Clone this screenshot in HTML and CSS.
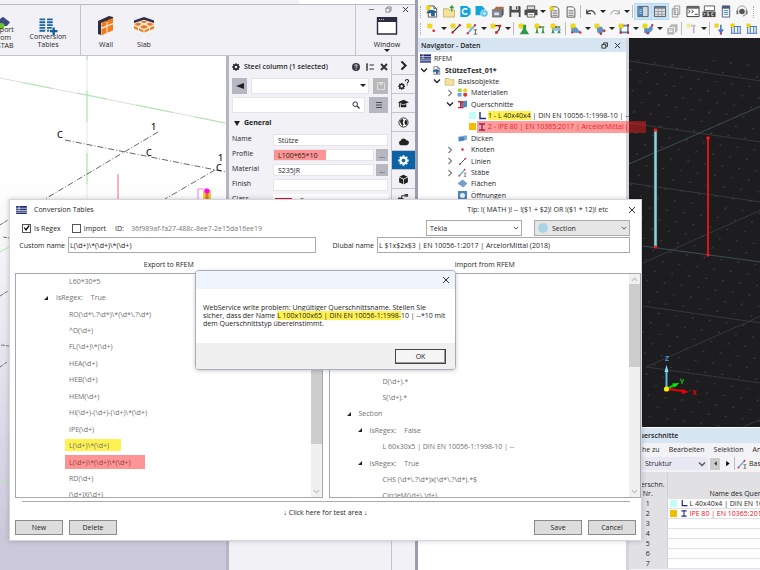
FILE: index.html
```html
<!DOCTYPE html>
<html lang="de">
<head>
<meta charset="utf-8">
<title>Conversion Tables</title>
<link rel="stylesheet" href="styles.css">
</head>
<body>
<svg class="defs" aria-hidden="true">
  <symbol id="star" viewBox="0 0 6 6"><path d="M3 0l.7 1.6L5.4.9 4.6 2.5 6 3l-1.4.6.8 1.6-1.7-.7L3 6l-.7-1.5-1.7.7.8-1.6L0 3l1.4-.5L.6.9l1.7.7z" fill="#f5dc00" stroke="#d9bd00" stroke-width=".3"/></symbol>
  <symbol id="gear" viewBox="0 0 16 16"><path fill="none" stroke="currentColor" stroke-width="3.4" d="M8 3.6a4.4 4.4 0 1 0 .01 0z"/><path stroke="currentColor" stroke-width="2.6" d="M8 .4v2.4M8 13.2v2.4M.4 8h2.4M13.2 8h2.4M2.6 2.6l1.8 1.8M11.6 11.6l1.8 1.8M2.6 13.4l1.8-1.8M11.6 4.4l1.8-1.8"/></symbol>
  <symbol id="flag" viewBox="0 0 12 9"><path fill="#1d2c72" d="M0 0h12v9H0z"/><path stroke="#fff" stroke-width=".8" d="M3.3 0v5M0 2.5h12M0 5h12M0 7h12"/></symbol>
  <symbol id="fileglobe" viewBox="0 0 14 14"><path d="M3 1h6l3 3v9H3z" fill="#fff" stroke="#555"/><path d="M9 1v3h3" fill="none" stroke="#555"/><path d="M1 9c1-5 9-5 11-1l-2 1v3H6V9z" fill="#2e6391"/></symbol>
  <symbol id="folder" viewBox="0 0 14 12"><path d="M1 2h5l1 1.5h6V11H1z" fill="#f2e29a" stroke="#b8a14c" stroke-width=".7"/></symbol>
  <symbol id="doc" viewBox="0 0 14 14"><path d="M2.500 1h6.500l2.500 2.500V13h-9z" fill="#fff" stroke="#444"/><path d="M4 5h6M4 7h6M4 9h6M4 11h6" stroke="#555" stroke-width=".8"/></symbol>
  <symbol id="line" viewBox="0 0 14 14"><path d="M3 11l8-8" stroke="#222" stroke-width="1.2"/><circle cx="3" cy="11" r="1.4" fill="#d8202a"/><circle cx="11.500" cy="2.500" r="1.400" fill="#d8202a"/></symbol>
  <symbol id="member" viewBox="0 0 14 14"><path d="M2 12l8-9" stroke="#6fa4dc" stroke-width="2"/><circle cx="2" cy="12" r="1.300" fill="#d8202a"/><circle cx="10.500" cy="2.500" r="1.300" fill="#d8202a"/><path d="M9 8h4M11 8v5M9 13h4" stroke="#444" stroke-width=".9"/></symbol>
  <symbol id="ang" viewBox="0 0 8 8"><path d="M2 0v6.500h6" fill="none" stroke="#1c2a86" stroke-width="1.400"/></symbol>
  <symbol id="ibeam" viewBox="0 0 8 8"><path d="M1 1h6M4 1v6M1 7h6" fill="none" stroke="#2b2f86" stroke-width="1.300"/></symbol>
  <symbol id="down" viewBox="0 0 8 8"><path d="M1 2.500l3 3 3-3" fill="none" stroke="currentColor" stroke-width="1.300"/></symbol>
  <symbol id="right" viewBox="0 0 8 8"><path d="M2.500 1l3 3-3 3" fill="none" stroke="currentColor" stroke-width="1.100"/></symbol>
  <symbol id="cross" viewBox="0 0 8 8"><path d="M1 1l6 6M7 1L1 7" stroke="currentColor" stroke-width="1"/></symbol>
  <symbol id="surface" viewBox="0 0 14 14"><path d="M2 5h5l5 6H2z" fill="#5f95cf" stroke="#3a6ea6" stroke-width=".6"/><circle cx="12" cy="11" r="1.400" fill="#d8202a"/><circle cx="2.500" cy="11" r="1.200" fill="#d8202a"/></symbol>
  <symbol id="support" viewBox="0 0 14 14"><path d="M2 4.500h10M3.500 4v7M10.500 4v7" stroke="#2f9a4c" stroke-width="1.500"/><path d="M1.500 12l2-4 2 4zM8.500 12l2-4 2 4z" fill="#2f9a4c"/><circle cx="7" cy="5" r="1.200" fill="#d8202a"/></symbol>
  <symbol id="load" viewBox="0 0 14 14"><path d="M2 12V4h10v8M5 4v7M9 4v7M1 12h12" fill="none" stroke="#3c78c0" stroke-width="1.200"/></symbol>
</svg>

<div class="desk">
  <section class="tekla" aria-label="Tekla">
    <div class="strip"><span></span></div>
    <header class="ribbon">
      <div class="group first">
        <div class="tool rstab"><svg viewBox="0 0 22 18"><path d="M2 8L11 1l9 7-4 5H6z" fill="#3c4a80"/><circle cx="9" cy="13" r="4" fill="#6fc52b"/></svg><span>Export<br>from<br>RSTAB</span></div>
        <div class="tool conv"><svg viewBox="0 0 20 18"><path d="M1 1.500h6M9 1.500h6M1 4.500h6M9 4.500h6M1 7.500h6M9 7.500h6M1 10.500h6M9 10.500h5M1 13.500h6M9 13.500h2" stroke="#1c64a4" stroke-width="1.900"/><path d="M16 10v8M12 14h8" stroke="#155a9d" stroke-width="2.400"/></svg><span>Conversion<br>Tables</span></div>
      </div>
      <div class="group shapes">
        <div class="tool"><svg viewBox="0 0 18 22"><path d="M1 6L12 1l4 1v3L4 8v12l-3-1z" fill="#2c2d48"/><path d="M4.500 7.500l5-2v5l-5 2zM10.500 5l5.500-2v5l-5.500 2.200zM4.500 14l5-2v6l-5 2.500zM10.500 11.500l5.500-2.200v6l-5.500 2.500z" fill="#f57c14"/></svg><span>Wall</span></div>
        <div class="tool"><svg viewBox="0 0 22 22"><path d="M1 8V5.500L11 2l10 3.500V8L11 4.800z" fill="#2c2d48"/><path d="M1 9l4.500-1.500L9 9l-4 2.200zM21 9l-4.500-1.500L13 9l4 2.200zM11 8.300l3.800-1.500L11 5.600 7.200 6.800zM6.500 12l4.500-2.200 4.500 2.200-4.500 2zM1 10.800l4 1.900v2.500L1 13.500zM21 10.800l-4 1.900v2.500l4-1.700zM6 13.200l4.500 2v2.300L6 15.600zM16 13.200l-4.500 2v2.300l4.500-1.900z" fill="#f57c14"/></svg><span>Slab</span></div>
      </div>
      <div class="group window">
        <div class="winctl"><svg viewBox="0 0 8 8"><path d="M1 4h6" stroke="#667"/></svg><svg viewBox="0 0 8 8"><path d="M1 2.500h4.500V7H1zM2.500 2.500V1H7v4.500H5.500" fill="none" stroke="#667" stroke-width=".8"/></svg><svg><use href="#cross"/></svg></div>
        <div class="tool"><svg viewBox="0 0 22 18"><path d="M1.500 1h19v16h-19z" fill="#fff" stroke="#2b2b42" stroke-width="1.400"/><path d="M1 0h20v5H1z" fill="#2b2b42"/><path d="M3 2.500h6" stroke="#ccc" stroke-dasharray="1 1"/></svg><span>Window</span><i class="caret"></i></div>
      </div>
    </header>
    <div class="tmain">
      <svg class="model" viewBox="0 56 226 514" preserveAspectRatio="xMinYMin slice">
        <path d="M87 56v144" stroke="#ecefec" stroke-width="1.500"/><path d="M87 56v4M87 91v31M87 153v31" stroke="#b9efb9" stroke-width="1.500"/>
        <path d="M0 78l226 45" stroke="#dcdcdc"/><path d="M23 82.600l29 5.800M77 93l30 6M136 105l37 7.500M195 117l30 6M0 252l9-5M0 481l9 2" stroke="#aee8ae"/>
        <path d="M65 140l161 32M158 132L45 199M215 170l-50 29" fill="none" stroke="#555" stroke-width=".9" stroke-dasharray="6 2 1 2"/>
        <path d="M0 225l8-5M3 237l6 1M0 296l8-5M1 345l8 1M0 367l7-5" stroke="#555" stroke-width=".8" stroke-dasharray="4 1"/>
        <path d="M118 174v26" stroke="#f99aa2" stroke-width="1.500"/>
        <path d="M198 200v-11h9" fill="none" stroke="#ee82ee"/><path d="M203 190h8v10h-8z" fill="#f1c84a"/><path d="M207 192v8" stroke="#e07818" stroke-width="3"/><circle cx="207" cy="191" r="2.500" fill="#f0f"/>
        <g font-family="Noto Sans" font-size="9" font-weight="500" fill="#111"><text x="57" y="138">C</text><text x="151" y="130">1</text><text x="146" y="156">C</text><text x="218" y="161">1</text><text x="216" y="171">C</text></g>
      </svg>
      <div class="props">
        <div class="phead"><svg class="i8"><use href="#gear"/></svg><b>Steel column (1 selected)</b>
          <svg class="i8" viewBox="0 0 8 8"><circle cx="4" cy="4" r="4" fill="#3a3c48"/><path d="M2.800 3.200c0-2 2.600-1.600 2.400-.2C5 3.800 4 3.800 4 4.800M4 5.600v1" fill="none" stroke="#fff" stroke-width=".9"/></svg>
          <svg class="i8" viewBox="0 0 8 8"><path d="M0 1h2M0 4h2M0 7h2M1 1v6M3.500 2H8M3.500 6H8" stroke="#333" stroke-width="1.200"/></svg>
          <svg class="i8" viewBox="0 0 8 8"><path d="M1 1l6 6M7 1L1 7" stroke="#333" stroke-width="2"/></svg></div>
        <div class="prow"><button aria-label="Back"><svg class="i8" viewBox="0 0 8 8"><path d="M8 1v6L0 4z" fill="#222"/></svg></button><select class="grow" aria-label="Preset"><option></option></select><i class="caret over"></i><button class="dis" aria-label="Save preset"><svg class="i8" viewBox="0 0 8 8"><path d="M.5.500h6l1 1v6h-7z" fill="none" stroke="#ddd"/><path d="M2.500.5h3V3h-3z" fill="#ddd"/></svg></button></div>
        <div class="prow search"><input class="grow" aria-label="Search"><svg class="i8 mag" viewBox="0 0 8 8"><circle cx="3.200" cy="3.200" r="2.300" fill="none" stroke="#333"/><path d="M5 5l2.500 2.500" stroke="#333" stroke-width="1.300"/></svg><button class="wide" aria-label="Menu"><svg class="i8" viewBox="0 0 8 8"><path d="M1 1.500h6M1 4h6M1 6.500h6" stroke="#333" stroke-width=".8"/></svg></button></div>
        <h3>General</h3>
        <div class="fields">
          <label for="n">Name</label><div><input id="n" value="Stütze"></div>
          <label for="p">Profile</label><div><input id="p" class="hl" value="L100*65*10"><button aria-label="Select profile">...</button></div>
          <label for="m">Material</label><div><input id="m" value="S235JR"><button aria-label="Select material">...</button></div>
          <label for="f">Finish</label><div><input id="f"></div>
          <label for="c">Class</label><div class="cls"><i></i><select id="c"><option>3</option></select><i class="caret"></i></div>
        </div>
      </div>
      <nav class="side" aria-label="Panels">
        <button aria-label="Collapse"><svg viewBox="0 0 8 8"><path d="M2.500 1l3 3-3 3" fill="none" stroke="#222" stroke-width="1.500"/></svg></button>
        <button aria-label="Settings help"><svg viewBox="0 0 12 12"><g transform="translate(0 4) scale(.5)"><use href="#gear" width="16" height="16"/></g><path d="M8 2.500C8-.3 12 .2 11.500 2.500 11.300 3.600 10 3.600 10 5M10 6v1.200" fill="none" stroke="#222" stroke-width="1.100"/></svg></button>
        <button aria-label="Tutorials"><svg viewBox="0 0 12 12"><path d="M6 2l6 2.500L6 7 0 4.500zM3 6.500l3 1.300 3-1.300V10H3zM1 5h1v5H1z" fill="#222"/></svg></button>
        <button aria-label="Online"><svg viewBox="0 0 12 12"><circle cx="6" cy="6" r="5" fill="#fff" stroke="#222"/><path d="M2 4l3-2 1 2-1 2 1 2-1 2-2-3zM8 3l2 1v4L8 9 7 6z" fill="#222"/></svg></button>
        <button aria-label="Cloud"><svg viewBox="0 0 12 12"><path d="M3 10a2.500 2.500 0 0 1-.2-4.800A3.300 3.300 0 0 1 9 4.600 2.700 2.700 0 0 1 9.500 10z" fill="#222"/></svg></button>
        <button class="on" aria-label="Properties"><svg><use href="#gear"/></svg></button>
        <button aria-label="Model"><svg viewBox="0 0 12 12"><path d="M6 .8l4.500 2.200L6 5.200 1.500 3zM1.200 3.800l4.400 2.100v5.300L1.200 9zM10.800 3.800L6.400 5.900v5.300L10.800 9z" fill="#222"/></svg></button>
        <button aria-label="Links"><svg viewBox="0 0 12 12"><path d="M1 6h5M4 3v6M4 3h3M4 9h3" fill="none" stroke="#222"/><path d="M7 1h4v3H7zM7 7h4v4H7zM0 5h3v3H0z" fill="#444"/></svg></button>
      </nav>
    </div>
  </section>

  <section class="rfem" aria-label="RFEM">
    <div class="bars">
      <div class="bar"><i class="grip"></i>
        <div class="seven">
          <svg viewBox="0 0 14 14"><use href="#fileglobe" width="14" height="14"/><use href="#star" width="6" height="6"/></svg>
          <svg viewBox="0 0 14 14"><use href="#folder" y="2" width="14" height="12"/><path d="M10 7V1M8 3.500L10 1l2 2.500" fill="none" stroke="#3aa335" stroke-width="1.400"/></svg>
          <svg viewBox="0 0 14 14"><path d="M2 1h7l4 3v6l-4 3H2z" fill="#13a3dd"/><path d="M9.500 5a3 3 0 1 0 0 4" fill="none" stroke="#fff" stroke-width="1.700"/></svg>
          <svg viewBox="0 0 14 14"><path d="M0 1h7l3 3v5l-2 2H0z" fill="#13a3dd"/><circle cx="9.500" cy="9" r="4" fill="#35b3e4" stroke="#fff" stroke-width=".6"/><path d="M6 9h7M9.500 5.500v7M7 6.500l5 5M12 6.500l-5 5" stroke="#fff" stroke-width=".6"/></svg>
          <svg viewBox="0 0 14 14"><path d="M1 5h10v8H1z" fill="#7d8792" stroke="#555" stroke-width=".6"/><path d="M2 5l3-3h8l-2 3z" fill="#a86c45"/><path d="M11 5l2-3v8l-2 3z" fill="#555"/><path d="M3 8h5v3H3z" fill="#dde3ea"/></svg>
          <svg viewBox="0 0 14 14"><path d="M1 1h11l1 1v11H1z" fill="#4c4c4c"/><path d="M3.500 1h7v4h-7zM3 8h8v5H3z" fill="#eee"/><path d="M8 1.500h1.500v3H8z" fill="#444"/></svg>
          <svg viewBox="0 0 14 14"><path d="M3 1h8v4H3z" fill="#ddd" stroke="#555"/><path d="M0 5h14v6H0z" fill="#4c4c4c"/><path d="M3 8h8v5H3z" fill="#fff" stroke="#555"/><path d="M4.500 10.500h5" stroke="#777"/></svg>
        </div><i class="caret"></i>
        <svg viewBox="0 0 14 14"><use href="#doc" width="14" height="14"/><use href="#star" width="6" height="6"/></svg><svg><use href="#doc"/></svg><i class="sep"></i>
        <svg viewBox="0 0 14 14"><path d="M2 4v5h5M2 9c2-5 8-5 10 1" fill="none" stroke="#444" stroke-width="1.400"/></svg><i class="caret"></i>
        <svg viewBox="0 0 14 14"><path d="M12 4v5H7M12 9c-2-5-8-5-10 1" fill="none" stroke="#aaa" stroke-width="1.200"/></svg><i class="caret"></i><i class="sep"></i>
        <div class="seven">
          <svg class="sel" viewBox="0 0 14 14"><path d="M1.500 1.500h11v11h-11z" fill="#d4d7da" stroke="#555"/><path d="M2 2h5v10H2z" fill="#447eb7"/><path d="M3 5h3M3 7h3M3 9h3" stroke="#fff" stroke-width=".6"/></svg>
          <svg class="sel" viewBox="0 0 14 14"><path d="M1 1.500h12v11H1z" fill="#dde0e4" stroke="#555"/><path d="M1 1.500h12v2.500H1z" fill="#6c7a89"/><path d="M1 7h12M1 10h12M5 4v8M9 4v8" stroke="#777" stroke-width=".6"/></svg>
          <svg viewBox="0 0 14 14"><path d="M5 1h6v9H5zM3 4h6v9H3z" fill="#eee" stroke="#999"/><path d="M5 6h2M5 8h2M5 10h2" stroke="#999"/></svg>
          <svg viewBox="0 0 14 14"><path d="M.5 1.500h13v11H.5z" fill="#fff" stroke="#333"/><path d="M.5 1.500h13V4H.5z" fill="#666"/><path d="M2 5.500l2 1.500-2 1.500M5.500 5.500l2 1.500-2 1.500M9 10h3" fill="none" stroke="#222"/></svg>
          <svg viewBox="0 0 14 14"><path d="M2 1h11v5H2z" fill="#fff" stroke="#555"/><path d="M0 7h14v6H0z" fill="#444"/><path d="M1 8.500l2 1.500-2 1.500M7 8.500H5v1.500h2v1.500H5M12 8.500h-2v3h2" fill="none" stroke="#fff" stroke-width=".8"/></svg>
          <svg viewBox="0 0 14 14"><path d="M3 1h8v12H3z" fill="#fff" stroke="#44597a"/><path d="M3 1h8v3H3z" fill="#44597a"/><path d="M4.500 6h5M4.500 8h5M4.500 10h5" stroke="#447eb7"/></svg>
          <svg viewBox="0 0 14 14"><path d="M2 9V6a5 5 0 0 1 10 0v3" fill="none" stroke="#999" stroke-width="1"/><path d="M1 6h2v4H1zM11 6h2v4h-2z" fill="#777"/><circle cx="7" cy="7" r="3" fill="#555"/><path d="M11 10l-3 2" stroke="#555"/></svg>
        </div><i class="grip end"></i>
      </div>
      <div class="bar"><i class="grip"></i>
        <svg viewBox="0 0 14 14"><use href="#star" x="1" y="0" width="7" height="7"/><circle cx="9" cy="9" r="1.500" fill="#d8202a"/></svg><i class="caret"></i>
        <svg viewBox="0 0 14 14"><use href="#line" width="14" height="14"/><use href="#star" width="7" height="7"/></svg>
        <svg viewBox="0 0 14 14"><use href="#member" width="14" height="14"/><use href="#star" width="7" height="7"/></svg><i class="caret"></i>
        <svg viewBox="0 0 14 14"><path d="M3 3h8v4L8 11" fill="none" stroke="#333" stroke-width="1.300"/><path d="M10 2h3v3h-3zM6 9.500h3v3H6z" fill="#d8202a"/><use href="#star" width="7" height="7"/></svg><i class="caret"></i><i class="sep"></i>
        <svg viewBox="0 0 14 14"><path d="M2 13l4-6h3l4 6z" fill="#2f9a4c"/><path d="M7.500 2v6" stroke="#2f9a4c" stroke-width="4"/><use href="#star" width="7" height="7"/></svg>
        <svg viewBox="0 0 14 14"><use href="#support" width="14" height="14"/><use href="#star" width="7" height="7"/></svg>
        <svg viewBox="0 0 14 14"><use href="#support" width="14" height="14"/><path d="M3 6h9l1 3H4z" fill="#8cbce8"/><use href="#star" width="7" height="7"/></svg><i class="sep"></i>
        <svg viewBox="0 0 14 14"><use href="#surface" width="14" height="14"/><use href="#star" width="7" height="7"/></svg><i class="caret"></i>
        <svg viewBox="0 0 14 14"><path d="M3 5l6-1 3 5-4 4-4-2z" fill="#5b90c8"/><circle cx="12" cy="9" r="1.400" fill="#d8202a"/><circle cx="8" cy="12.500" r="1.400" fill="#d8202a"/><use href="#star" width="7" height="7"/></svg><i class="caret"></i>
        <svg viewBox="0 0 14 14"><path d="M3 3h8.500v8H3z" fill="#fff" stroke="#4a86c4" stroke-width="2"/><path d="M2 10h2.500v2.500H2zM10.500 10H13v2.500h-2.500zM10.500 1.500H13V4h-2.500z" fill="#d8202a"/><use href="#star" width="7" height="7"/></svg><i class="caret"></i>
        <svg viewBox="0 0 14 14"><path d="M3 5l4 2 5-5v6l-5 5-4-2z" fill="#5b90c8" stroke="#376aa0" stroke-width=".5"/><circle cx="12" cy="2.500" r="1.300" fill="#d8202a"/><circle cx="7" cy="12" r="1.300" fill="#d8202a"/><use href="#star" width="7" height="7"/></svg><i class="caret"></i>
        <svg viewBox="0 0 14 14"><path d="M2 6h7v7H2zM4 4l2-2h7v7l-2 2V4z" fill="#bbb" stroke="#999" stroke-width=".6"/><path d="M3.500 8h4M3.500 10h4" stroke="#fff"/></svg><i class="sep"></i>
        <svg viewBox="0 0 14 14"><path d="M9 2v10M6 3h5" stroke="#bbb" stroke-width="2"/><use href="#star" width="6" height="6" opacity=".4"/></svg><i class="caret"></i><i class="sep"></i>
        <svg viewBox="0 0 14 14"><path d="M8 2v8M5.500 7.500L8 11l2.500-3.500" fill="none" stroke="#3c78c0" stroke-width="1.800"/><circle cx="8" cy="12.500" r="1.300" fill="#d8202a"/><use href="#star" width="6" height="6"/></svg>
        <svg viewBox="0 0 14 14"><use href="#load" width="14" height="14"/><use href="#star" width="6" height="6"/></svg>
        <svg viewBox="0 0 14 14"><use href="#load" width="14" height="14"/><use href="#star" width="6" height="6"/></svg>
      </div>
    </div>
    <div class="rmain">
      <div class="navi">
        <div class="nhead"><b>Navigator - Daten</b><svg viewBox="0 0 8 8"><path d="M1 3h4.500v4H1zM3 3V1h4.500v4H5.500" fill="none" stroke="#222"/></svg><svg><use href="#cross"/></svg></div>
        <div class="tree">
          <div class="l0"><svg class="ic"><use href="#flag"/></svg>RFEM</div>
          <div class="l1"><svg class="ex"><use href="#down"/></svg><svg class="ic"><use href="#fileglobe"/></svg><b>StützeTest_01*</b></div>
          <div class="l2"><svg class="ex"><use href="#down"/></svg><svg class="ic"><use href="#folder"/></svg>Basisobjekte</div>
          <div class="l3"><svg class="ex thin"><use href="#right"/></svg><svg class="ic" viewBox="0 0 12 10"><circle cx="3" cy="2.500" r="2.300" fill="#9ad838"/><circle cx="9" cy="2.500" r="2.300" fill="#f0cf30"/><circle cx="9" cy="7.500" r="2.300" fill="#e0323c"/><path d="M.5 5.500H5v4H.5z" fill="#6da0dc"/></svg>Materialien</div>
          <div class="l3"><svg class="ex"><use href="#down"/></svg><svg class="ic" viewBox="0 0 12 10"><path d="M4 2l7-1.500v7L5 9z" fill="#4f86c8"/><path d="M1 2h6M4 2v6M1 8.500h6" stroke="#d8202a" stroke-width="1.600"/></svg>Querschnitte</div>
          <div class="l4"><i class="sw cy"></i><svg class="i8"><use href="#ang"/></svg><span><mark>1 - L 40x40x4</mark> | DIN EN 10056-1:1998-10 | --</span></div>
          <div class="l4 marked"><i class="sw or"></i><svg class="i8"><use href="#ibeam"/></svg><span>2 - IPE 80 | EN 10365:2017 | ArcelorMittal (</span></div>
          <div class="l3"><i class="ex"></i><svg class="ic" viewBox="0 0 12 10"><path d="M1 3l9-1.500 1 1v4L2 8.500z" fill="#7fb0de"/><path d="M2 4l6-1v4L2 8z" fill="#4c80b8"/></svg>Dicken</div>
          <div class="l3"><svg class="ex thin"><use href="#right"/></svg><svg class="ic" viewBox="0 0 12 10"><circle cx="6" cy="5" r="1.300" fill="#d8202a"/></svg>Knoten</div>
          <div class="l3"><svg class="ex thin"><use href="#right"/></svg><svg class="ic"><use href="#line"/></svg>Linien</div>
          <div class="l3"><svg class="ex thin"><use href="#right"/></svg><svg class="ic"><use href="#member"/></svg>Stäbe</div>
          <div class="l3"><i class="ex"></i><svg class="ic" viewBox="0 0 12 10"><path d="M1 5l5-4 5 4-4 4z" fill="#6fa0d0" stroke="#4778aa" stroke-width=".5"/></svg>Flächen</div>
          <div class="l3"><i class="ex"></i><svg class="ic" viewBox="0 0 12 10"><path d="M1 0h10v10H1z" fill="#4d84bc"/><circle cx="6" cy="5" r="2.800" fill="#e6eff8"/></svg>Öffnungen</div>
        </div>
      </div>
      <div class="work">
        <svg class="scene" viewBox="628 38 132 389" preserveAspectRatio="xMinYMin slice">
          <defs><pattern id="dots" width="17" height="17" patternUnits="userSpaceOnUse" patternTransform="matrix(1 .14 -.45 .55 0 0)"><circle cx="4" cy="4" r=".7" fill="#717171"/></pattern></defs>
          <path d="M628 38h132v389H628z" fill="#1d1d1f"/><path d="M628 60h132v367H628z" fill="url(#dots)"/>
          <path d="M628 61l132 20M628 123l132 19M628 183l132 19M642 306l118 17M645 367l115 16M642 263l118-53M645 367l115-51M742 427l18-8" stroke="#3b3c3e" stroke-width=".9"/>
          <path d="M628 164l132-58M642 246l118 16" stroke="#385055"/>
          <path d="M654.500 130v117" stroke="#5c3436" stroke-width="3.600"/><path d="M654.500 130v117" stroke="#79dbe2" stroke-width="2.400"/><path d="M707 138v117" stroke="#d8141c" stroke-width="2"/>
          <g fill="#f21a1a"><circle cx="654.500" cy="130" r="1.800"/><circle cx="654.500" cy="247" r="1.600"/><circle cx="707" cy="138" r="1.800"/><circle cx="707" cy="255" r="1.600"/></g>
          <path d="M665.500 389v-18" stroke="#5ab8f0" stroke-width="2"/><path d="M663.500 372l2-7 2 7z" fill="#8adcff"/>
          <path d="M665.500 389l8-4" stroke="#0c0" stroke-width="2"/><path d="M671 383.500l7.500-.5-5 4.500z" fill="#0e0"/>
          <path d="M665.500 389l17 2" stroke="#e00" stroke-width="2"/><path d="M681 389l7 3-7 2z" fill="#e00"/><circle cx="665.500" cy="389" r="2.600" fill="#fe0"/>
          <g font-family="Noto Sans" font-size="7" font-weight="600"><text x="664" y="361" fill="#4f9be8">Z</text><text x="679" y="384" fill="#0d0">Y</text><text x="691" y="395" fill="#e00">X</text></g>
        </svg>
        <div class="grid">
          <div class="ghead">Querschnitte</div>
          <div class="gmenu"><span>Gehe zu</span><span>Bearbeiten</span><span>Selektion</span><span>Ansicht</span></div>
          <div class="gtools"><select aria-label="Kategorie"><option>Struktur</option></select><svg class="i8 chev"><use href="#down"/></svg><button class="gray" aria-label="Zurück"><svg viewBox="0 0 8 8"><path d="M5.500 1.500v5L2.500 4z" fill="#333"/></svg></button><button aria-label="Weiter"><svg viewBox="0 0 8 8"><path d="M2.500 1v6l4-3z"/></svg></button><i class="sep"></i><svg class="mem"><use href="#member"/></svg><span>Basisobjekte</span></div>
          <table>
            <thead><tr class="blank"><th></th><th></th></tr><tr><th>Querschn.<br>Nr.</th><th class="low">Name des Querschnitts</th></tr></thead>
            <tbody>
              <tr><th>1</th><td><i class="sw cy"></i><svg class="i8"><use href="#ang"/></svg>L 40x40x4 | DIN EN 10056-1:1998-10</td></tr>
              <tr><th>2</th><td class="red"><i class="sw or"></i><svg class="i8"><use href="#ibeam"/></svg>IPE 80 | EN 10365:2017</td></tr>
              <tr><th>3</th><td></td></tr><tr><th>4</th><td></td></tr><tr><th>5</th><td></td></tr><tr><th>6</th><td></td></tr><tr><th>7</th><td></td></tr>
            </tbody>
          </table>
        </div>
      </div>
    </div>
  </section>

  <section class="dialog" role="dialog" aria-labelledby="dt">
    <header><svg class="flag"><use href="#flag"/></svg><span id="dt">Conversion Tables</span><span class="tip">Tip: !( MATH )! -- !($1 + $2)! OR !($1 * 12)! etc</span><button class="x" aria-label="Close"><svg><use href="#cross"/></svg></button></header>
    <div class="opts">
      <label><input type="checkbox" checked>Is Regex</label><label><input type="checkbox">Import</label><span>ID:</span><span class="id">36f989af-fa27-488c-8ee7-2e15da16ee19</span>
      <span class="pick"><select aria-label="Program"><option>Tekla</option></select><svg><use href="#down"/></svg></span>
      <span class="pick sec"><i></i><select aria-label="Type"><option>Section</option></select><svg><use href="#down"/></svg></span>
    </div>
    <div class="names"><label for="cn">Custom name</label><input id="cn" value="L(\d+)\*(\d+)\*(\d+)"><label for="dn">Dlubal name</label><input id="dn" value="L $1x$2x$3 | EN 10056-1:2017 | ArcelorMittal (2018)"></div>
    <div class="lists">
      <div class="col"><h4>Export to RFEM</h4>
        <div class="list left"><div class="rows">
          <div class="d3">L60*30*5</div>
          <div class="d2"><i></i>IsRegex:<em>True</em></div>
          <div class="d3">RO(\d*\.?\d*)\*(\d*\.?\d*)</div><div class="d3">^D(\d+)</div><div class="d3">FL(\d+)\*(\d+)</div><div class="d3">HEA(\d+)</div><div class="d3">HEB(\d+)</div><div class="d3">HEM(\d+)</div><div class="d3">HI(\d+)-(\d+)-(\d+)\*(\d+)</div><div class="d3">IPE(\d+)</div>
          <div class="d3"><span class="y">L(\d+)\*(\d+)</span></div><div class="d3"><span class="r">L(\d+)\*(\d+)\*(\d+)</span></div><div class="d3">RD(\d+)</div><div class="d3">(\d+)X(\d+)</div>
        </div><div class="scroll"><svg><use href="#down"/></svg><b></b><svg><use href="#down"/></svg></div></div>
      </div>
      <div class="col wide"><h4>Import from RFEM</h4>
        <div class="list right"><div class="rows">
          <div class="d3">D(\d+).*</div><div class="d3">S(\d+).*</div>
          <div class="d1"><i></i>Section</div><div class="d2"><i></i>IsRegex:<em>False</em></div><div class="d3">L 60x30x5 | DIN EN 10056-1:1998-10 | --</div>
          <div class="d2"><i></i>IsRegex:<em>True</em></div><div class="d3">CHS (\d*\.?\d*)x(\d*\.?\d*).*$</div><div class="d3">CircleM(\d+\.\d+)</div>
        </div><div class="scroll"><svg><use href="#down"/></svg><b></b><svg><use href="#down"/></svg></div></div>
      </div>
    </div>
    <hr>
    <div class="test">↓ Click here for test area ↓</div>
    <footer><button>New</button><button>Delete</button><button class="push">Save</button><button>Cancel</button></footer>
  </section>

  <section class="msg" role="alertdialog" aria-label="WebService">
    <header><button class="x" aria-label="Close"><svg><use href="#cross"/></svg></button></header>
    <p>WebService write problem: Ungültiger Querschnittsname. Stellen Sie<br>sicher, dass der Name <mark>L 100x100x65 | DIN EN 10056-1:1998-</mark>10 | --*10 mit<br>dem Querschnittstyp übereinstimmt.</p>
    <footer><button>OK</button></footer>
  </section>
</div>
</body>
</html>
```
FILE: styles.css
```css
* { box-sizing: border-box; }
body, h3, h4, p { margin: 0; }
body { font: 7px/9px "Open Sans", "Noto Sans", sans-serif; color: #1e1e26; }
input, select, button { font: inherit; color: inherit; margin: 0; padding: 0; border: 0; border-radius: 0; background: none; min-width: 0; }
select { appearance: none; }
svg { display: block; flex: none; }
.defs { position: absolute; width: 0; height: 0; }
.i8 { width: 8px; height: 8px; }
.caret { flex: none; border: 3px solid transparent; border-top-color: #222; border-bottom: 0; width: 6px; height: 3px; }
.sep { flex: none; width: 1px; height: 13px; background: #bbb; }

.desk { position: relative; display: grid; grid-template-columns: 11fr 9fr; height: 100vh; overflow: hidden; }

/* Tekla window */
.tekla { display: flex; flex-direction: column; min-width: 0; border-right: 3px solid #9b9eae; background: #f1f1f6; overflow: hidden; }
.strip { height: 5px; flex: none; border-bottom: 1px solid #b9bac4; display: flex; justify-content: flex-end; }
.strip span { width: 28%; background: #fff; }
.ribbon { display: flex; height: 51px; flex: none; border-bottom: 1px solid #c3c4cd; }
.group { display: flex; }
.first { width: 81px; border-right: 1px solid #c3c4cd; }
.tool { display: flex; flex-direction: column; align-items: center; text-align: center; line-height: 8px; }
.tool span { white-space: nowrap; }
.rstab { width: 28px; margin-left: -11px; padding-top: 11px; }
.rstab svg { width: 18px; height: 14px; margin-bottom: -4px; }
.conv { width: 62px; padding-top: 13px; }
.conv svg { width: 20px; height: 17px; margin-bottom: -2px; }
.shapes { flex: 1; padding: 10px 0 0 14px; gap: 16px; }
.shapes svg { width: 22px; height: 22px; margin-bottom: 4px; }
.window { width: 60px; border-left: 1px solid #c3c4cd; flex-direction: column; align-items: center; }
.winctl { display: flex; gap: 10px; padding: 1px 0 0 5px; }
.winctl svg { width: 7px; height: 7px; }
.window .tool { padding-left: 3px; }
.window .tool svg { width: 22px; height: 18px; margin: 4px 0 6px; }
.tmain { display: flex; flex: 1; min-height: 0; }
.model { flex: 1; width: 0; height: 100%; background: linear-gradient(#fff 24%, #cbc8db 94%); }
.props { width: 165px; flex: none; border-left: 3px solid #b5b6c2; padding: 4px 3px 0; display: flex; flex-direction: column; gap: 3px; }
.phead { display: flex; align-items: center; gap: 4px; height: 13px; margin-bottom: 2px; }
.phead b { flex: 1; white-space: nowrap; font-weight: 600; }
.phead .i8 + .i8 { margin-left: 2px; }
.prow { position: relative; display: flex; gap: 4px; height: 16px; }
.prow button { width: 15px; background: #b6b7c1; display: grid; place-items: center; }
.prow .wide { width: 19px; }
.prow .dis { background: #b9b9b9; }
.grow { flex: 1; background: #fff; border: 1px solid #e4e4ea; width: 0; }
.over { position: absolute; right: 22px; top: 6px; }
.mag { position: absolute; right: 28px; top: 4px; }
.props h3 { font-size: 7px; line-height: 12px; font-weight: 700; display: flex; align-items: center; gap: 4px; padding-left: 2px; margin-top: 1px; }
.props h3::before { content: ""; border: 3px solid transparent; border-top: 5px solid #222; border-bottom: 0; }
.fields { display: grid; grid-template-columns: 41px 1fr; row-gap: 3px; margin-top: 2px; }
.fields div { display: flex; gap: 2px; height: 12px; }
.fields input { flex: 1; background: #fff; border: 1px solid #e4e4ea; padding-left: 4px; width: 0; }
.fields .hl { background: linear-gradient(90deg, #ff9494 52px, #fff 52px); }
.fields button { width: 12px; background: #b6b7c1; line-height: 7px; }
.fields .cls { background: #fff; padding: 0 4px 0 2px; gap: 8px; align-items: center; }
.cls i:first-child { width: 17px; height: 5px; background: #c3202c; }
.cls select { flex: 1; height: 9px; line-height: 9px; }
.side { width: 24px; flex: none; border-left: 1px solid #c3c4cd; }
.side button { display: grid; place-items: center; width: 100%; height: 19px; border-bottom: 1px solid #c3c4cd; color: #222; }
.side svg { width: 11px; height: 11px; }
.side .on { background: #0b62a4; color: #fff; }

/* RFEM window */
.rfem { display: flex; flex-direction: column; min-width: 0; background: #fff; overflow: hidden; }
.bars { background: #f7f7f7; padding: 3px 0 0 2px; height: 38px; flex: none; }
.bar { display: flex; align-items: center; height: 17px; }
.bar > svg { width: 16px; height: 12px; }
.bar .caret { margin: 0 1px; }
.bar .sep { margin: 0 2px 0 1px; }
.grip { flex: none; width: 2px; height: 12px; margin-right: 2px; border-left: 1px dotted #aaa; }
.end { margin-left: 3px; }
.seven { display: flex; justify-content: space-between; width: 115px; flex: none; }
.seven svg { width: 16px; height: 15px; padding: 1px; }
.seven .sel { background: #cce6fb; outline: 1px solid #b3d9f8; }
.rmain { display: flex; flex: 1; min-height: 0; }
.navi { position: relative; z-index: 1; width: 211px; flex: none; border-right: 3px solid #d3d5dd; }
.nhead { display: flex; align-items: center; gap: 6px; height: 14px; background: #d7e4f2; padding: 0 5px 0 3px; }
.nhead b { flex: 1; font-weight: 600; }
.nhead svg { width: 7px; height: 7px; }
.tree { display: grid; grid-auto-rows: 1fr; height: 148px; padding-left: 2px; white-space: nowrap; margin-top: 1px; }
.tree > div { display: flex; align-items: center; gap: 3px; }
.tree b { font-weight: 700; }
.ic { width: 11px; height: 9px; }
.ex { width: 8px; height: 8px; flex: none; }
.thin { color: #777; }
.tree .l2 { padding-left: 13px; }
.tree .l3 { padding-left: 26px; }
.tree .l4 { padding-left: 49px; gap: 2px; }
.sw { flex: none; width: 7px; height: 7px; }
.cy { background: #c4fbfb; }
.or { background: #f3bd00; }
.l4 span { overflow: hidden; }
mark { background: #fff250; color: inherit; padding: 2px 0; }
.tree .marked { position: relative; color: #e8101c; }
.marked::after { content: ""; position: absolute; left: 57px; right: -16px; top: 0; bottom: 0; background: #ff202070; }
.work { flex: 1; min-width: 0; display: flex; flex-direction: column; }
.scene { flex: 1; width: 100%; height: 0; }
.grid { height: 143px; flex: none; background: #f3f3f6; overflow: hidden; white-space: nowrap; }
.ghead { background: #d7e4f2; height: 16px; line-height: 16px; padding-left: 5px; font-weight: 600; border-top: 1px solid #fff; }
.gmenu { display: flex; gap: 9px; padding-left: 4px; height: 13px; align-items: center; font-weight: 500; }
.gtools { position: relative; display: flex; align-items: center; height: 15px; gap: 2px; padding-left: 13px; }
.gtools select { width: 66px; height: 13px; background: #e8e8f4; padding-left: 3px; flex: none; }
.gtools .chev { position: absolute; left: 69px; color: #555; }
.gtools button { width: 10px; height: 12px; display: grid; place-items: center; flex: none; }
.gtools .gray { background: #ccc; }
.gtools button svg { width: 7px; height: 7px; }
.mem { width: 10px; height: 10px; }
table { border-collapse: collapse; table-layout: fixed; width: 100%; min-width: 200px; margin-top: 1px; }
th, td { padding: 0; height: 10px; line-height: 9px; border-bottom: 1px solid #e0e0e3; }
th { font-weight: 400; background: #e1e1e4; border-right: 1px solid #d0d0d4; }
th:first-child { width: 38px; }
.low { vertical-align: bottom; }
.blank th { height: 7px; }
td { background: #fff; }
td .sw, td .i8 { display: inline-block; vertical-align: middle; margin: 0 3px 0 2px; height: 7px; }
td .i8 { margin: 0 2px 0 0; }
.red { color: #e8101c; }

/* Conversion Tables dialog */
.dialog { position: absolute; z-index: 2; left: 9px; right: 118px; top: 199px; background: #fff; border: 1px solid #d5d5dc; box-shadow: 0 0 5px #0003; }
.dialog header { display: flex; align-items: center; height: 19px; padding: 0 5px 0 6px; }
.flag { width: 11px; height: 8px; margin-right: 7px; }
.tip { margin-left: auto; margin-right: 20px; }
.x svg { width: 8px; height: 8px; color: #333; }
.opts { display: flex; align-items: center; height: 18px; padding: 0 11px 0 12px; gap: 7px; }
.opts label { display: flex; align-items: center; gap: 3px; margin-right: 4px; }
.opts label + label { margin-right: 2px; }
.opts input { appearance: none; width: 9px; height: 9px; border: 1px solid #555; display: grid; }
.opts input:checked::before { content: ""; background: #111; clip-path: polygon(10% 50%, 25% 38%, 42% 60%, 80% 8%, 95% 20%, 44% 92%); }
.id { color: #777; }
.pick { position: relative; margin-left: auto; width: 96px; }
.pick select { width: 100%; height: 16px; border: 1px solid #aaa; padding-left: 3px; display: block; background: #fff; }
.pick svg { position: absolute; right: 3px; top: 5px; width: 6px; height: 6px; color: #555; }
.sec { margin-left: 5px; }
.sec select { background: #e6e6e6; padding-left: 17px; }
.sec i { position: absolute; left: 4px; top: 3px; width: 10px; height: 10px; border-radius: 50%; background: #a9d5e6; }
.names { display: flex; align-items: center; gap: 3px; padding: 0 11px 0 8px; }
.names input { flex: 1; height: 16px; border: 1px solid #aaa; padding-left: 1px; }
.names label { width: 47px; text-align: right; white-space: nowrap; }
.names input + label { width: 55px; }
.names label + input { flex: 248; }
.names input:last-child { flex: 253; }
.lists { display: flex; gap: 6px; padding-left: 5px; }
.col { flex: 308; min-width: 0; }
.wide.col { flex: 313; }
h4 { font-size: 7px; line-height: 9px; font-weight: 400; text-align: center; padding: 7px 0 4px; }
.list { height: 225px; border: 1px solid #a3a8b1; display: flex; overflow: hidden; color: #707070; }
.rows { flex: 1; display: grid; grid-auto-rows: 1fr; height: 230px; flex-shrink: 0; margin-top: -1px; }
.right .rows { margin-top: 99px; height: 131px; }
.rows > div { display: flex; align-items: center; }
.rows i { border: 2px solid #222; border-top-color: transparent; border-left-color: transparent; width: 4px; height: 4px; margin-right: 8px; }
.rows em { font-style: normal; margin-left: 8px; }
.d3 { padding-left: 53px; }
.d2 { padding-left: 28px; }
.d1 { padding-left: 17px; }
.y, .r { margin-left: -4px; padding: 2px 12px 1px 4px; background: #fff250; }
.r { background: #ff9494; color: #844; padding: 3px 15px 2px 4px; }
.scroll { width: 11px; background: #f0f0f0; display: flex; flex-direction: column; align-items: center; color: #bbb; padding: 2px 0; }
.scroll svg { width: 7px; height: 7px; }
.scroll svg:first-child { transform: scaleY(-1); }
.scroll b { width: 11px; background: #cdcdcd; height: 83px; margin: 1px 0 auto; }
.left .scroll b { height: 160px; }
hr { margin: 3px 11px 0 12px; border: 0; height: 1px; background: #aaa; }
.test { text-align: center; padding: 6px 0 3px; }
.dialog footer { display: flex; gap: 6px; padding: 0 5px 5px; }
.dialog footer button, .msg footer button { width: 48px; height: 15px; border: 1px solid #8b8b8b; background: #ddd; }
.dialog footer .push { margin-left: auto; }

/* Error message */
.msg { position: absolute; z-index: 3; left: 195px; top: 270px; width: 261px; background: #fff; border: 1px solid #a9adb8; border-radius: 4px; overflow: hidden; color: #222; box-shadow: 0 1px 4px #0003; }
.msg header { height: 18px; background: #eff3fb; display: flex; justify-content: flex-end; align-items: center; padding-right: 5px; }
.msg p { padding: 15px 7px 13px; line-height: 8px; white-space: nowrap; height: 54px; font-weight: 500; }
.msg mark { padding: 0; }
.msg footer { height: 26px; background: #f0f0f0; display: flex; justify-content: flex-end; align-items: center; padding-right: 9px; }
.msg footer button { width: 51px; background: #f5f5f5; border-color: #444; box-shadow: inset -1px -1px #999; }
```
